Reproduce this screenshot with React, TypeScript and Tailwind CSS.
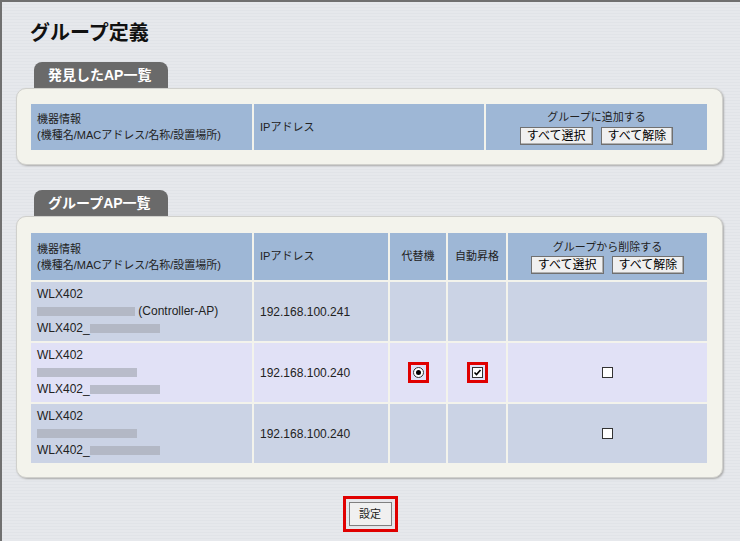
import React from "react";

const F = { fontFamily: '"Liberation Sans","Noto Sans CJK JP",sans-serif' };

function Btn({ children }: { children: React.ReactNode }) {
  return (
    <span className="inline-block h-[18px] px-[6px] leading-[16px] text-[12px] text-black bg-[#f0f0f0] border border-[#707070] shadow-[inset_-1px_-1px_0_#b0b0b0]">
      {children}
    </span>
  );
}

function Blur({ w }: { w: number }) {
  return <span className="inline-block h-[9px] align-middle bg-[#a8acb8] opacity-70" style={{ width: w }} />;
}

function Tab({ label }: { label: string }) {
  return (
    <div className="ml-[32px] w-[134px] h-[26px] rounded-t-[8px] bg-[#6a6a6a] text-white font-bold text-[14px] flex items-center pl-[14px]">
      {label}
    </div>
  );
}

function Box({ red, children }: { red?: boolean; children: React.ReactNode }) {
  return red ? <span className="inline-flex border-[3px] border-[#e00000] p-[2px]">{children}</span> : <>{children}</>;
}

function Info({ blurW, ctrl }: { blurW: number; ctrl?: boolean }) {
  return (
    <div className="leading-[17px]">
      <div>WLX402</div>
      <div><Blur w={blurW} />{ctrl && <span> (Controller-AP)</span>}</div>
      <div>WLX402_<Blur w={70} /></div>
    </div>
  );
}

export default function App() {
  const th = "bg-[#9eb7d6] text-[11px] text-[#222]";
  return (
    <div style={F} className="w-[740px] h-[541px] overflow-hidden border-l-2 border-t-2 border-[#707070] bg-[repeating-linear-gradient(0deg,#e6e8ec_0px,#e6e8ec_2px,#dcdfe4_3px)] text-[12px] text-[#222]">
      <div className="pt-[16px] pl-[28px] text-[20px] font-bold text-[#111] h-[60px]">グループ定義</div>
      <Tab label="発見したAP一覧" />
      <div className="ml-[14px] w-[707px] bg-[#f3f3ec] rounded-[10px] border border-[#d0d0cc] shadow-[1px_1px_2px_#aaa] px-[14px] pt-[15px] pb-[14px]">
        <div className="grid grid-cols-[221px_230px_221px] gap-[2px] h-[46px]">
          <div className={th + " pl-[6px] flex flex-col justify-center leading-[16px]"}><div>機器情報</div><div>(機種名/MACアドレス/名称/設置場所)</div></div>
          <div className={th + " pl-[6px] flex items-center"}>IPアドレス</div>
          <div className={th + " flex flex-col items-center justify-center gap-[1px]"}><div>グループに追加する</div><div className="flex gap-[8px]"><Btn>すべて選択</Btn><Btn>すべて解除</Btn></div></div>
        </div>
      </div>
      <div className="h-[25px]" />
      <Tab label="グループAP一覧" />
      <div className="ml-[14px] w-[707px] h-[262px] bg-[#f3f3ec] rounded-[10px] border border-[#d0d0cc] shadow-[1px_1px_2px_#aaa] px-[14px] pt-[16px]">
        <div className="grid grid-cols-[221px_134px_56px_58px_199px] grid-rows-[47px_59px_59px_59px] gap-[2px] text-[12px]">
          <div className={th + " pl-[6px] flex flex-col justify-center leading-[16px]"}><div>機器情報</div><div>(機種名/MACアドレス/名称/設置場所)</div></div>
          <div className={th + " pl-[6px] flex items-center"}>IPアドレス</div>
          <div className={th + " flex items-center justify-center"}>代替機</div>
          <div className={th + " flex items-center justify-center"}>自動昇格</div>
          <div className={th + " flex flex-col items-center justify-center gap-[1px]"}><div>グループから削除する</div><div className="flex gap-[8px]"><Btn>すべて選択</Btn><Btn>すべて解除</Btn></div></div>
          {[0, 1, 2].map((i) => {
            const bg = i === 1 ? "bg-[#e1e1f6]" : "bg-[#cbd3e5]";
            return (
              <React.Fragment key={i}>
                <div className={bg + " pl-[6px] flex items-center"}><Info blurW={i === 0 ? 98 : 100} ctrl={i === 0} /></div>
                <div className={bg + " pl-[6px] flex items-center"}>{i === 0 ? "192.168.100.241" : "192.168.100.240"}</div>
                <div className={bg + " flex items-center justify-center"}>
                  {i === 1 && <Box red><span className="w-[11px] h-[11px] rounded-full border border-[#333] bg-white flex items-center justify-center"><span className="w-[5px] h-[5px] rounded-full bg-black" /></span></Box>}
                </div>
                <div className={bg + " flex items-center justify-center"}>
                  {i === 1 && <Box red><span className="w-[11px] h-[11px] border border-[#333] bg-white flex items-center justify-center"><svg width="9" height="9" viewBox="0 0 9 9"><path d="M1.5 4.5 L3.5 6.5 L7.5 2" stroke="#000" strokeWidth="1.6" fill="none" /></svg></span></Box>}
                </div>
                <div className={bg + " flex items-center justify-center"}>
                  {i > 0 && <span className="w-[11px] h-[11px] border border-[#333] bg-white" />}
                </div>
              </React.Fragment>
            );
          })}
        </div>
      </div>
      <div className="flex justify-center pt-[18px] pr-[2px]">
        <span className="border-[3px] border-[#e00000] p-[3px]">
          <span className="inline-block h-[24px] w-[43px] text-center leading-[22px] text-[11px] bg-[#f0f0f0] border border-[#808080]">設定</span>
        </span>
      </div>
    </div>
  );
}
